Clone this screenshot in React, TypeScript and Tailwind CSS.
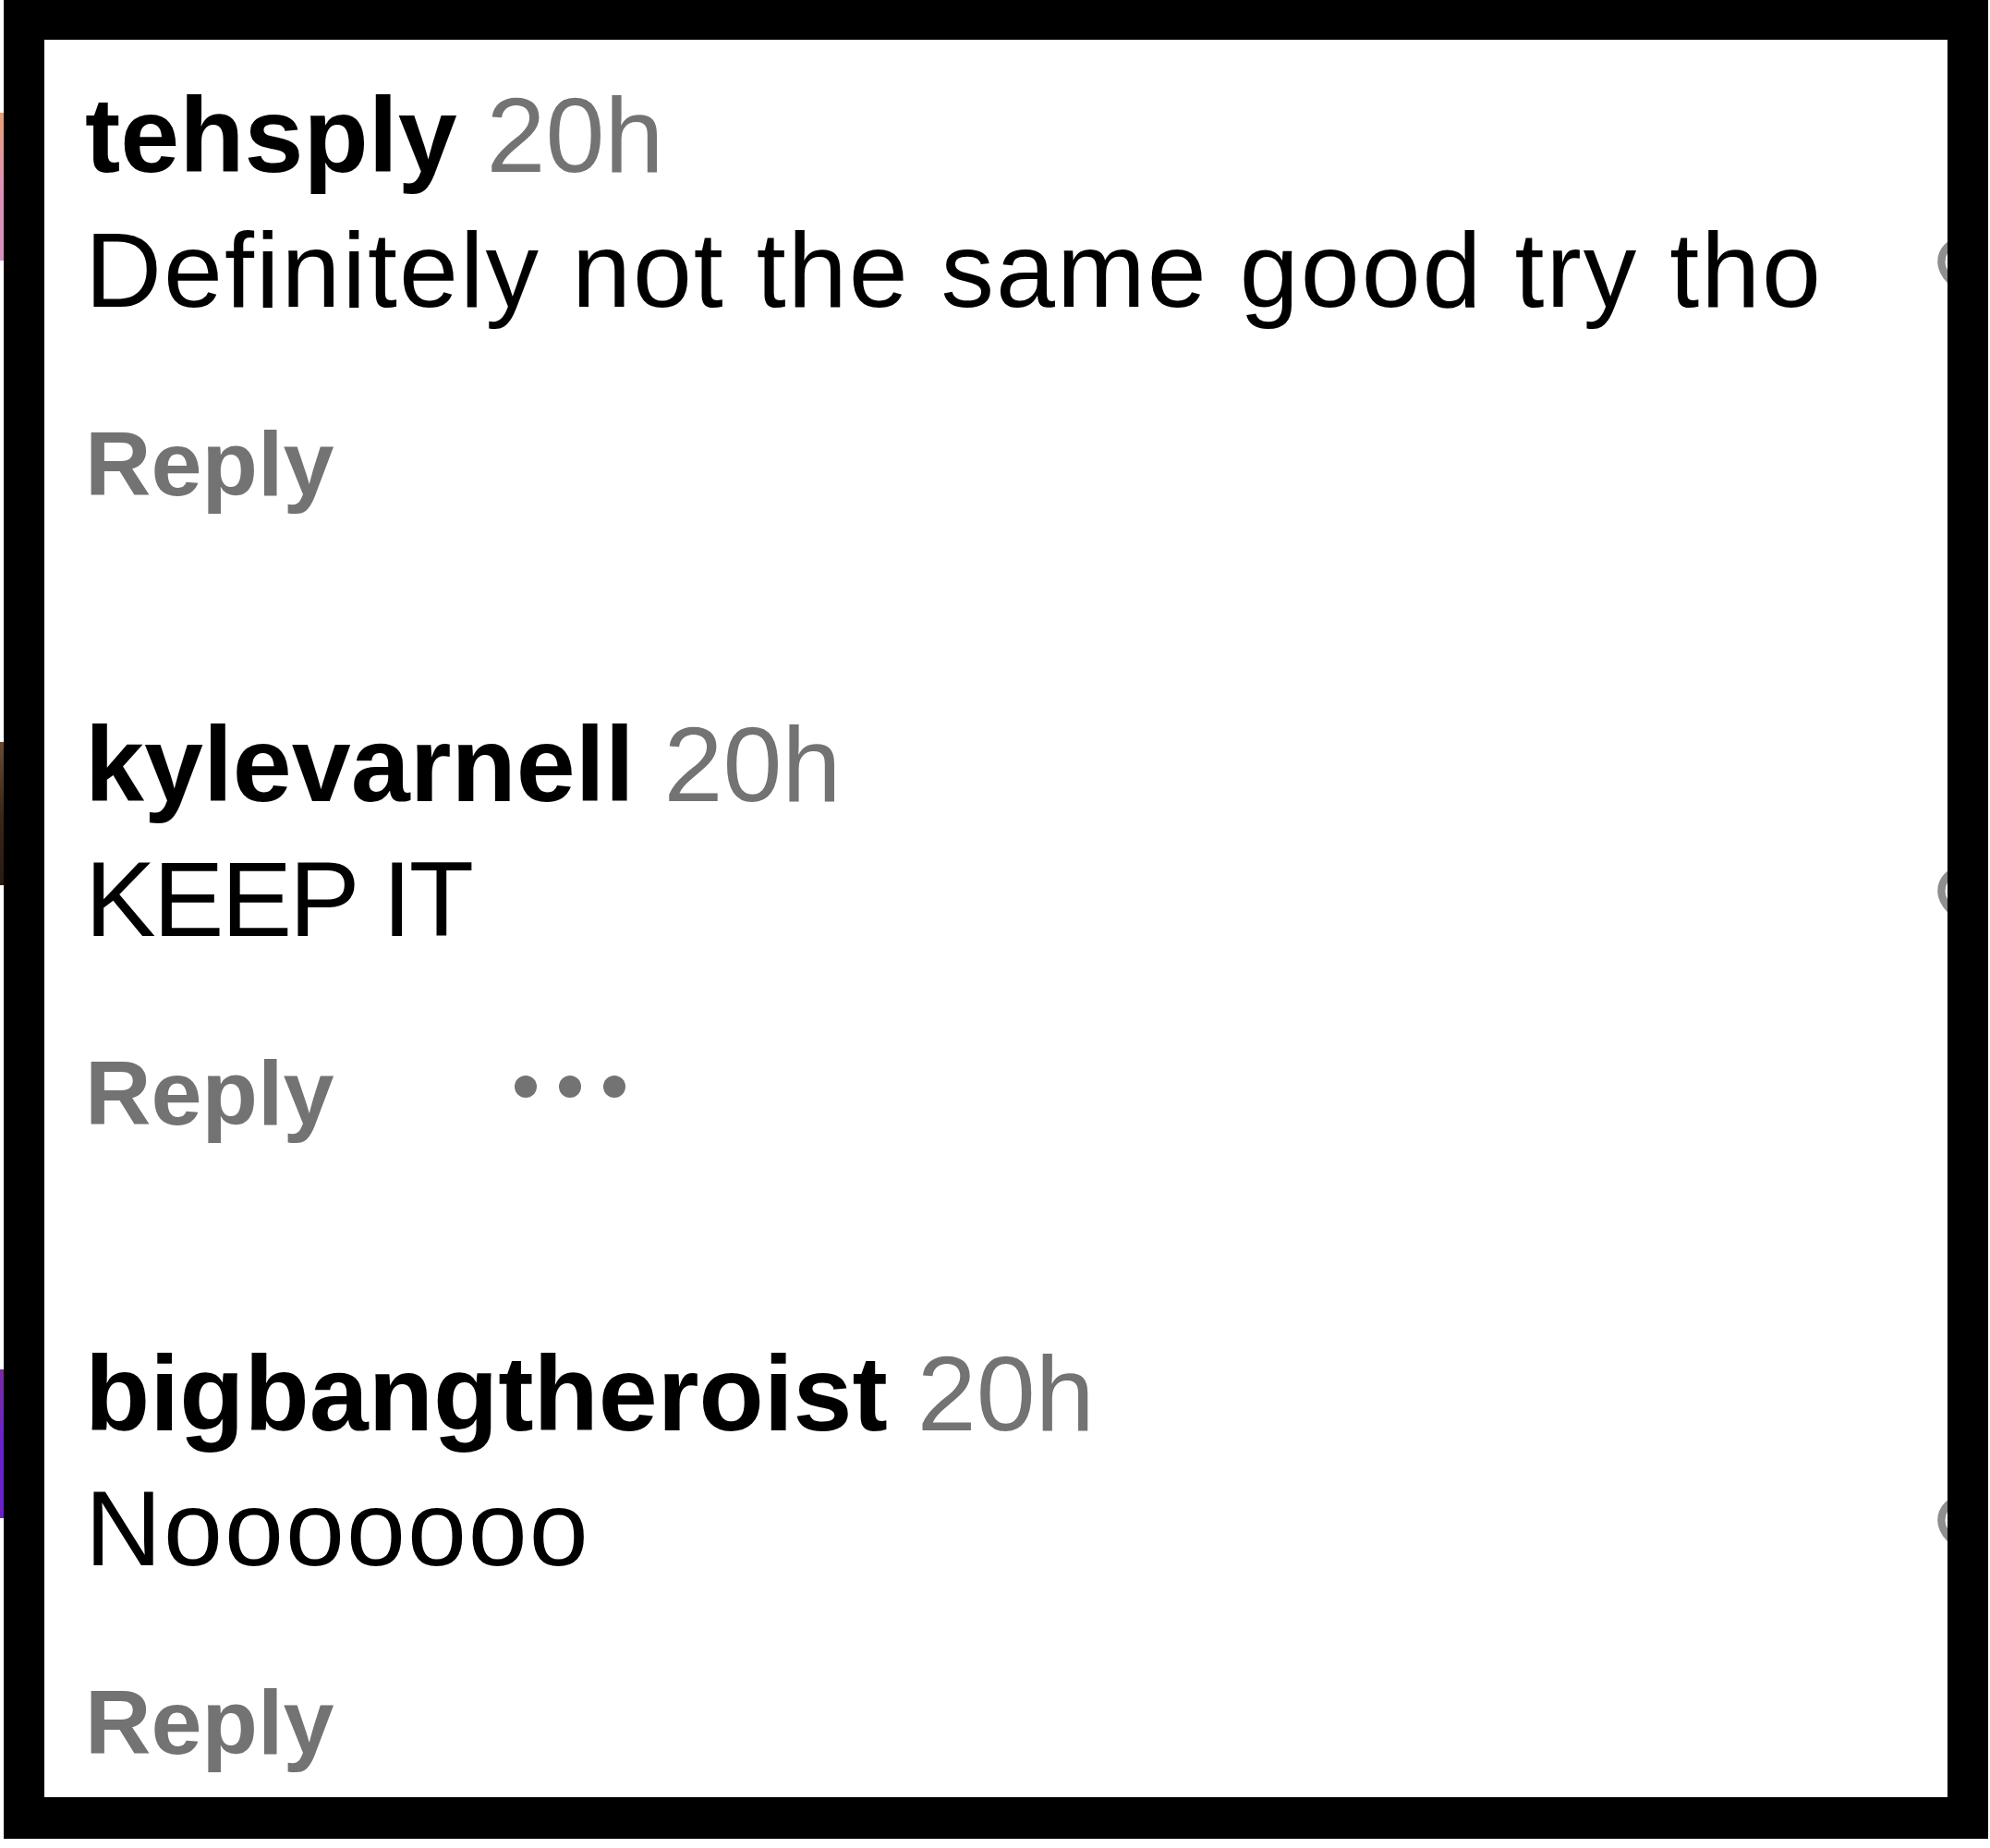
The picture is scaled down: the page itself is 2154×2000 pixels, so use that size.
import React from "react";

function Heart() {
  return (
    <svg
      className="absolute right-[-85px] top-[175px] w-[100px] h-[100px]"
      viewBox="0 0 24 24"
      fill="none"
      stroke="#8e8e8e"
      strokeWidth="2"
      strokeLinejoin="round"
    >
      <path d="M19 14c1.49-1.46 3-3.21 3-5.5A5.5 5.5 0 0 0 16.5 3c-1.760 0-3 .5-4.5 2-1.5-1.5-2.74-2-4.5-2A5.5 5.5 0 0 0 2 8.5c0 2.3 1.5 4.05 3 5.5l7 7Z" />
    </svg>
  );
}

type C = { user: string; text: string; track: string; more?: boolean };

const comments: C[] = [
  { user: "tehsply", text: "Definitely not the same good try tho", track: "tracking-[2px]" },
  { user: "kylevarnell", text: "KEEP IT", track: "tracking-[-3px]", more: true },
  { user: "bigbangtheroist", text: "Nooooooo", track: "tracking-[2px]" },
];

function Comment({ c, first }: { c: C; first: boolean }) {
  return (
    <div className={`relative flex flex-col pl-[44px] ${first ? "" : "mt-[187px]"}`}>
      <div className="h-[146px] leading-[146px] text-[115px] whitespace-nowrap">
        <span className="font-bold text-black">{c.user}</span>{" "}
        <span className="text-[#737373]">20h</span>
      </div>
      <div className={`h-[146px] leading-[146px] text-[115px] text-black whitespace-nowrap ${c.track}`}>
        {c.text}
      </div>
      <div className="mt-[71px] h-[131px] flex items-center">
        <span className="leading-[131px] text-[99px] font-bold text-[#737373]">Reply</span>
        {c.more && (
          <div className="ml-[195px] mb-[13px] flex items-center gap-[24px]">
            <span className="block w-[24px] h-[24px] rounded-full bg-[#737373]" />
            <span className="block w-[24px] h-[24px] rounded-full bg-[#737373]" />
            <span className="block w-[24px] h-[24px] rounded-full bg-[#737373]" />
          </div>
        )}
      </div>
      <Heart />
    </div>
  );
}

export default function App() {
  return (
    <div className="w-[2154px] h-[2000px] bg-white flex items-start font-['Liberation_Sans',Arial,sans-serif]">
      <div className="w-[4px] h-[1990px] flex flex-col">
        <div className="h-[122px]" />
        <div className="h-[160px] bg-gradient-to-b from-[#e8a070] via-[#e090b8] to-[#d890c0]" />
        <div className="h-[521px]" />
        <div className="h-[155px] bg-gradient-to-b from-[#6b4a30] via-[#3a2818] to-[#2a1a10]" />
        <div className="h-[524px]" />
        <div className="h-[161px] bg-gradient-to-b from-[#7a2aa0] via-[#6a1fd0] to-[#6a20c8]" />
      </div>
      <div className="w-[2148px] h-[1990px] bg-black pt-[43px] pl-[44px]">
        <div className="w-[2060px] h-[1902px] bg-white overflow-hidden pt-[30px] flex flex-col">
          {comments.map((c, i) => (
            <Comment key={c.user} c={c} first={i === 0} />
          ))}
        </div>
      </div>
    </div>
  );
}
